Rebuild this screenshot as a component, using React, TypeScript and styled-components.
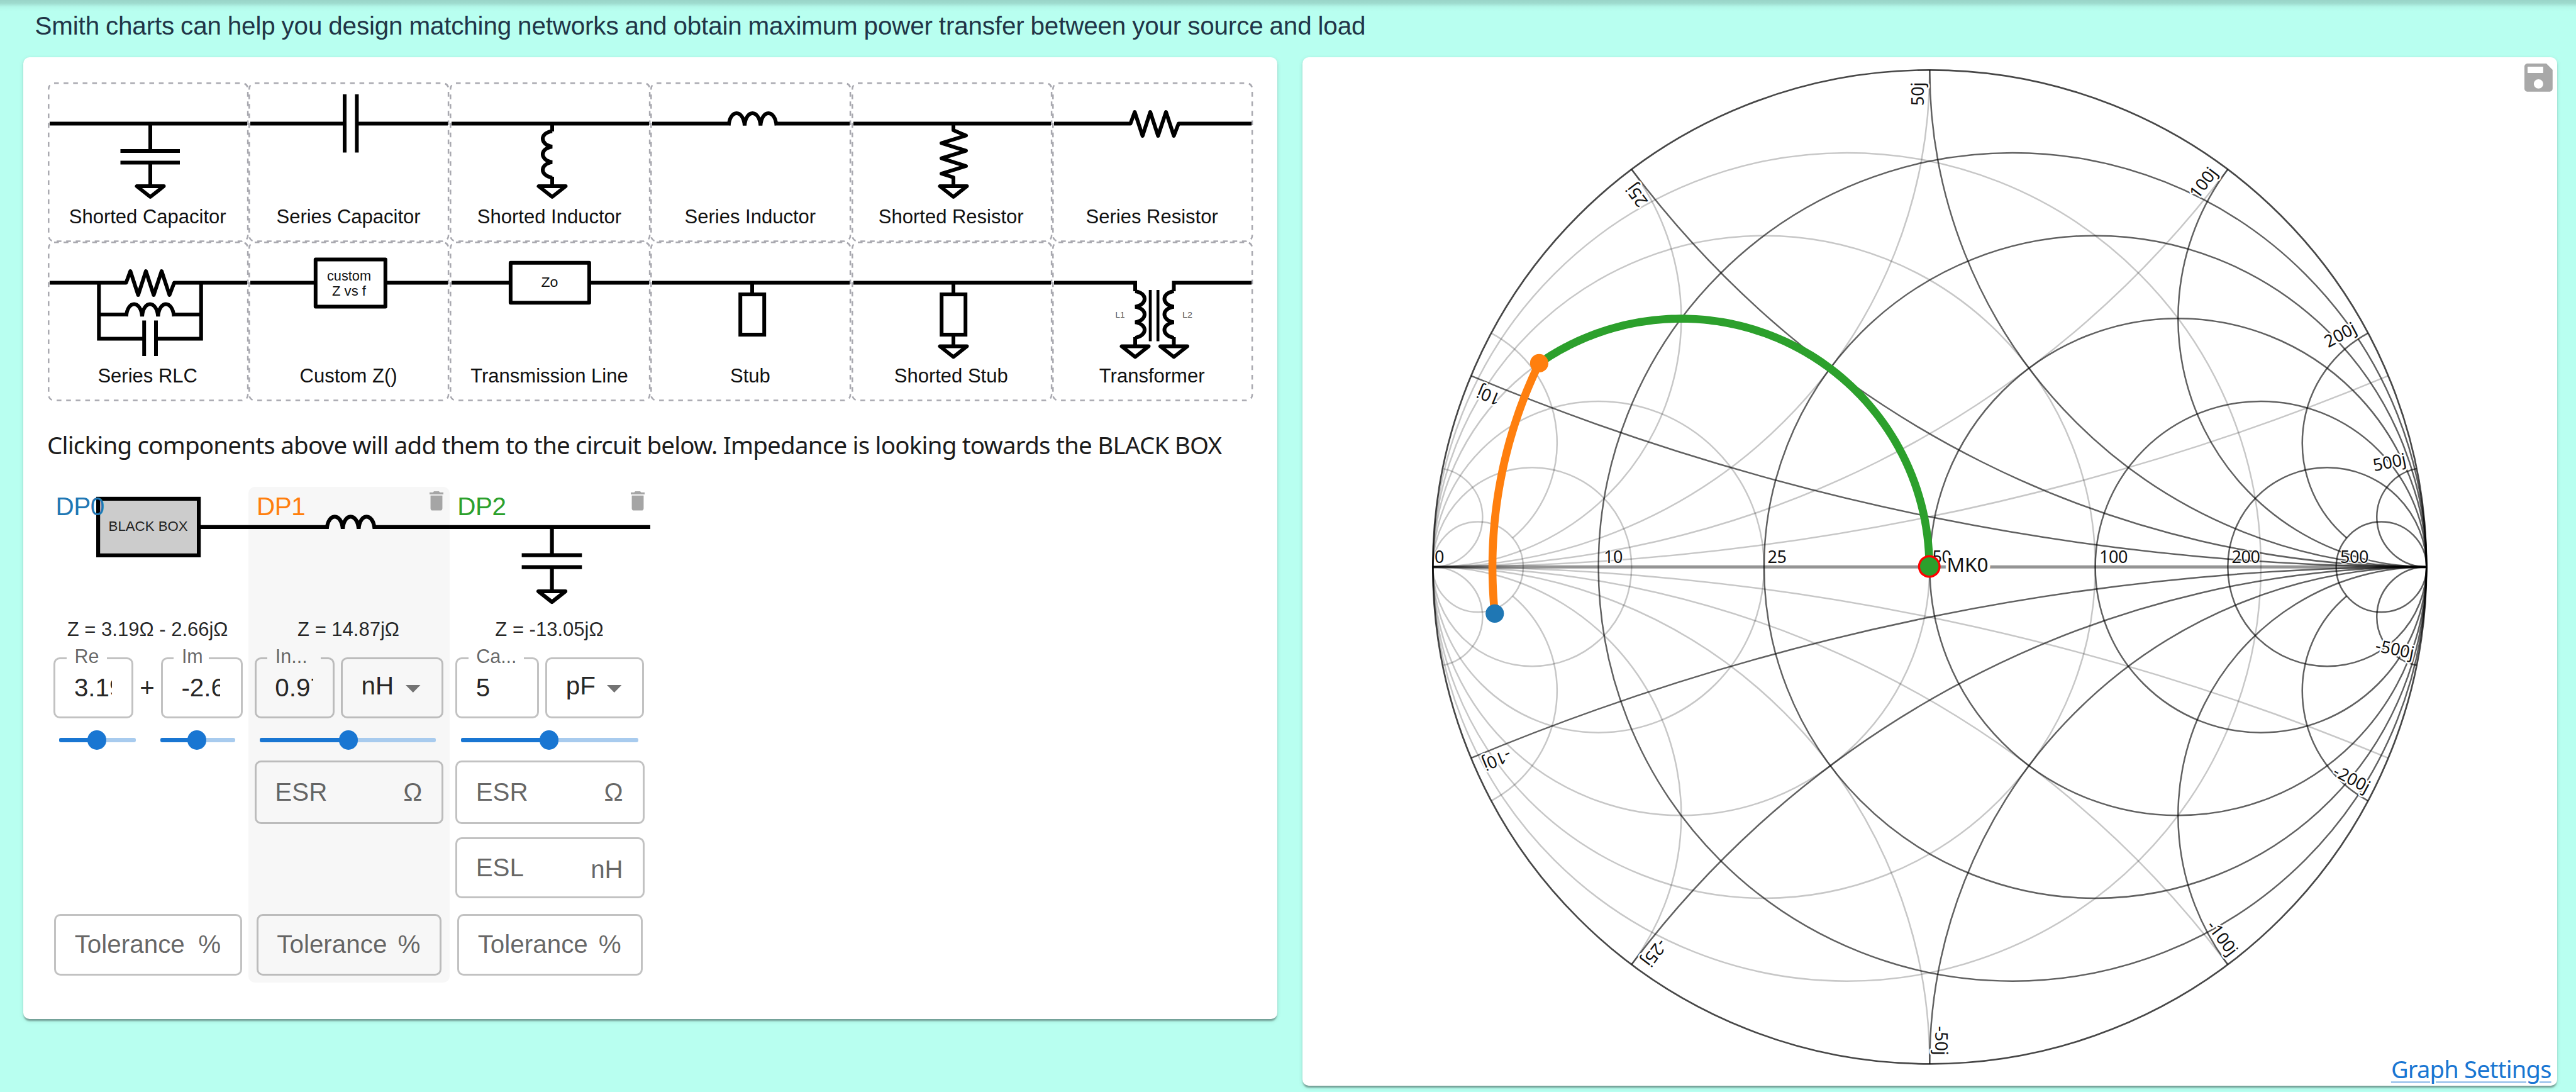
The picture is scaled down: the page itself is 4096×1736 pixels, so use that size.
import React from "react";
import styled, { createGlobalStyle } from "styled-components";

const GlobalStyle = createGlobalStyle`
  *, *::before, *::after { box-sizing: border-box; }
  html, body { margin: 0; padding: 0; }
  body { background: #b8fff0; overflow: hidden; }
`;

const grotesque = `"Liberation Sans", Arial, sans-serif`;
const humanist = `"Noto Sans", "Open Sans", sans-serif`;

/* ---------- page ---------- */

const Page = styled.div`
  width: 4096px;
  height: 1736px;
  display: flex;
  flex-direction: column;
  background: #b8fff0;
  color: rgba(0, 0, 0, 0.87);
  font-family: ${grotesque};
`;

const Intro = styled.header`
  height: 91.2px;
  flex: none;
  padding: 17.5px 0 0 55.5px;
  font-size: 40.4px;
  line-height: 47.3px;
  letter-spacing: -0.16px;
  word-spacing: -1px;
  white-space: nowrap;
  color: #213547;
  background: linear-gradient(
    to bottom,
    rgba(0, 0, 0, 0.17) 0,
    rgba(0, 0, 0, 0.14) 5px,
    rgba(0, 0, 0, 0.03) 11px,
    transparent 18px
  );
`;

const Cards = styled.main`
  display: flex;
  align-items: flex-start;
  gap: 39.4px;
  padding: 0 36.7px;
`;

const Card = styled.section<{ $height: number }>`
  width: 1994.8px;
  height: ${(p) => p.$height}px;
  flex: none;
  background: #fff;
  border-radius: 10px;
  box-shadow:
    0 5px 2.5px -2.5px rgba(0, 0, 0, 0.2),
    0 2.5px 2.5px rgba(0, 0, 0, 0.14),
    0 2.5px 7.5px rgba(0, 0, 0, 0.12);
`;

const CircuitCard = styled(Card)`
  padding: 39.4px 39.3px;
`;

const ChartCard = styled(Card)`
  position: relative;
`;

/* ---------- component palette ---------- */

const Palette = styled.div`
  display: grid;
  grid-template-columns: repeat(6, 319.4px);
  grid-auto-rows: 253.8px;
`;

const PaletteCell = styled.button`
  position: relative;
  display: flex;
  align-items: flex-end;
  justify-content: center;
  padding: 0 2px 22.2px 0;
  border: 0;
  background: none;
  color: #111;
  font-family: ${grotesque};
  font-size: 31px;
  line-height: 35.5px;
  white-space: nowrap;
`;

const CellDrawing = styled.svg`
  position: absolute;
  inset: 0;
  width: 319.4px;
  height: 253.8px;
  overflow: visible;
`;

const Hint = styled.p`
  margin: 42.9px 0 0 -1px;
  font-family: ${humanist};
  font-size: 38.5px;
  line-height: 52.4px;
  letter-spacing: -0.79px;
  white-space: nowrap;
  color: #1c1c1c;
`;

const OUTLINE =
  "M10,1.3H309.4A8.7,8.7 0 0 1 318.1,10V243.8A8.7,8.7 0 0 1 309.4,252.5H10A8.7,8.7 0 0 1 1.3,243.8V10A8.7,8.7 0 0 1 10,1.3Z";

const Ground = ({ x = 163, y = 165 }: { x?: number; y?: number }) => (
  <path d={`M${x - 21.5},${y}H${x + 21.5}L${x},${y + 17}Z`} strokeLinejoin="round" />
);

const coilAcross = (x: number, y: number) =>
  `M${x},${y + 3}c2,-26 23,-26 25.3,0c2,-26 23,-26 25.3,0c2,-26 23,-26 25.3,0`;

const coilDown = (x: number, y: number, bulge: number) =>
  `M${x},${y}c${bulge},3 ${bulge},21 0,24.7c${bulge},3 ${bulge},21 0,24.7c${bulge},3 ${bulge},21 0,24.7`;

const ZIGZAG = "M3,65.5H124.5L131.3,47L143.7,85L156,47L168.4,85L181,47L193.5,85L201,65.5H317";

const Symbol = {
  shortedCapacitor: (
    <>
      <path d="M3,65.5H317M163,65V109M115.5,109H210M115.5,127.5H210M163,127.5V164" />
      <Ground />
    </>
  ),
  seriesCapacitor: <path d="M3,65.5H153M172.4,65.5H317M153,19V111.6M172.4,19V111.6" />,
  shortedInductor: (
    <>
      <path d={`M3,65.5H317M163,65V78${coilDown(163, 77.5, -20)}M163,150V164`} />
      <Ground />
    </>
  ),
  seriesInductor: <path d={`M3,65.5H126M199.5,65.5H317${coilAcross(124.7, 65.5)}`} />,
  shortedResistor: (
    <>
      <path
        d="M3,65.5H317M162,65V76L182,84.5L143,96.5L182,108.7L143,120.7L182,133L143,145L162,151V164"
        strokeLinejoin="round"
      />
      <Ground x={162} />
    </>
  ),
  seriesResistor: <path d={ZIGZAG} strokeLinejoin="round" />,
  seriesRlc: (
    <>
      <path d={ZIGZAG} strokeLinejoin="round" />
      <path d={`M81.3,65V154.5H153.2M243.8,65V154.5H172M81.3,116H126M199.5,116H243.8${coilAcross(124.7, 116)}`} />
      <path d="M153.2,125.5V182M172,125.5V182" />
    </>
  ),
  customZ: (
    <>
      <path d="M3,65.5H105M220,65.5H317" />
      <rect x="106.8" y="28.4" width="111" height="75" strokeLinejoin="round" />
      <Caption x={160} y={61.6} size={22} width={70}>custom</Caption>
      <Caption x={160} y={85.6} size={22} width={54}>Z vs f</Caption>
    </>
  ),
  transmissionLine: (
    <>
      <path d="M3,65.5H95M224,65.5H317" />
      <rect x="96.9" y="33.8" width="125" height="63.4" strokeLinejoin="round" />
      <Caption x={159} y={72.4} size={22} width={27}>Zo</Caption>
    </>
  ),
  stub: (
    <>
      <path d="M3,65.5H317M162,65V84" />
      <rect x="143.2" y="84" width="38" height="64" />
    </>
  ),
  shortedStub: (
    <>
      <path d="M3,65.5H317M162,65V84M162,148V165" />
      <rect x="143.2" y="84" width="38" height="64" />
      <Ground x={162} y={166.5} />
    </>
  ),
  transformer: (
    <>
      <path d={`M3,65.5H132V79${coilDown(132, 79, 20)}M132,152V166`} />
      <path d={`M317,65.5H193.5V79${coilDown(193.5, 79, -20)}M193.5,152V166`} />
      <path d="M156,77V158.5M168.2,77V158.5" strokeWidth={4.6} />
      <Ground x={132} y={166.5} />
      <Ground x={193.5} y={166.5} />
      <Caption x={108} y={121} size={13.5} width={15} tone="#555">L1</Caption>
      <Caption x={215} y={121} size={13.5} width={16} tone="#555">L2</Caption>
    </>
  ),
};

function Caption(props: {
  x: number;
  y: number;
  size: number;
  width: number;
  tone?: string;
  children: React.ReactNode;
}) {
  return (
    <text
      x={props.x}
      y={props.y}
      fontSize={props.size}
      textLength={props.width}
      lengthAdjust="spacingAndGlyphs"
      textAnchor="middle"
      fill={props.tone ?? "#111"}
      stroke="none"
      fontFamily='"Liberation Sans", Arial, sans-serif'
    >
      {props.children}
    </text>
  );
}

const PALETTE: { name: string; art: React.ReactNode }[] = [
  { name: "Shorted Capacitor", art: Symbol.shortedCapacitor },
  { name: "Series Capacitor", art: Symbol.seriesCapacitor },
  { name: "Shorted Inductor", art: Symbol.shortedInductor },
  { name: "Series Inductor", art: Symbol.seriesInductor },
  { name: "Shorted Resistor", art: Symbol.shortedResistor },
  { name: "Series Resistor", art: Symbol.seriesResistor },
  { name: "Series RLC", art: Symbol.seriesRlc },
  { name: "Custom Z()", art: Symbol.customZ },
  { name: "Transmission Line", art: Symbol.transmissionLine },
  { name: "Stub", art: Symbol.stub },
  { name: "Shorted Stub", art: Symbol.shortedStub },
  { name: "Transformer", art: Symbol.transformer },
];

function PaletteItem({ name, art }: { name: string; art: React.ReactNode }) {
  return (
    <PaletteCell>
      <CellDrawing viewBox="0 0 319.4 253.8" fill="none" stroke="#000" strokeWidth={6}>
        <path d={OUTLINE} stroke="#a9a9b0" strokeWidth={2.5} pathLength={74} strokeDasharray="0.5 0.5" />
        {art}
      </CellDrawing>
      {name}
    </PaletteCell>
  );
}

/* ---------- circuit ---------- */

const Circuit = styled.div`
  display: flex;
  margin-top: 40.7px;
  height: 788px;
`;

const Stage = styled.div<{ $shade: string }>`
  position: relative;
  width: 319.4px;
  height: 788px;
  display: flex;
  flex-direction: column;
  padding: 0 9.4px 11.6px;
  border-radius: 10px;
  background: ${(p) => p.$shade};
`;

const StageDrawing = styled.svg`
  width: 319.4px;
  height: 209px;
  flex: none;
  margin-left: -9.4px;
  overflow: visible;
`;

const StageTitle = styled.div<{ $color: string }>`
  position: absolute;
  left: 12.5px;
  top: 8px;
  font-size: 40.4px;
  line-height: 47.3px;
  letter-spacing: -0.4px;
  color: ${(p) => p.$color};
`;

const TrashIcon = styled.svg`
  position: absolute;
  left: 288px;
  top: 7px;
  width: 22px;
  height: 30.6px;
  fill: #a5a5a5;
`;

const Impedance = styled.div`
  height: 35.5px;
  margin: 0 2px 26.4px 0;
  font-size: 31px;
  line-height: 35.5px;
  text-align: center;
  white-space: nowrap;
`;

const InputRow = styled.div<{ $gap: number }>`
  display: flex;
  align-items: center;
  gap: ${(p) => p.$gap}px;
  height: 96.7px;
  flex: none;
`;

const Plus = styled.span`
  width: 43.5px;
  margin-top: 1px;
  text-align: center;
  font-size: 40.4px;
`;

const Outlined = styled.div<{ $width?: number; $height: number }>`
  position: relative;
  display: flex;
  align-items: center;
  width: ${(p) => (p.$width ? `${p.$width}px` : "auto")};
  height: ${(p) => p.$height}px;
  flex: none;
  padding: 0 31px 0 29.5px;
  border: 3px solid rgba(0, 0, 0, 0.24);
  border-radius: 10px;
  font-size: 40.4px;
  line-height: 47.3px;
  white-space: nowrap;
`;

const FieldLabel = styled.span<{ $width: number; $shade: string }>`
  position: absolute;
  left: 17.5px;
  top: -22.4px;
  width: ${(p) => p.$width}px;
  padding-left: 12.5px;
  background: ${(p) => p.$shade};
  color: rgba(0, 0, 0, 0.6);
  font-size: 30.5px;
  line-height: 35.5px;
`;

const FieldValue = styled.span`
  width: 62px;
  margin-top: 1px;
  overflow: hidden;
`;

const UnitSelect = styled(Outlined)`
  padding-bottom: 4.5px;
  padding-right: 33px;
  justify-content: space-between;
`;

const Caret = styled.svg`
  width: 23.5px;
  height: 12px;
  margin-top: 8.5px;
  fill: #737373;
`;

const Optional = styled(Outlined)<{ $top?: string; $inset?: number }>`
  justify-content: space-between;
  margin: ${(p) => p.$top ?? "0"} ${(p) => p.$inset ?? 0}px 0;
  color: rgba(0, 0, 0, 0.6);
`;

const Suffix = styled.span<{ $drop?: number }>`
  position: relative;
  top: ${(p) => p.$drop ?? 0}px;
`;

const SliderRow = styled.div`
  display: flex;
  align-items: center;
  height: 67.6px;
  flex: none;
  padding-left: 8.4px;
  gap: 39px;
`;

const Rail = styled.div<{ $width: number }>`
  position: relative;
  width: ${(p) => p.$width}px;
  height: 6.4px;
  margin-top: 1.6px;
  border-radius: 3px;
  background: #a8cbee;
`;

const Track = styled.div<{ $at: number }>`
  width: ${(p) => p.$at}px;
  height: 6.4px;
  border-radius: 3px;
  background: #1976d2;
`;

const Thumb = styled.div<{ $at: number }>`
  position: absolute;
  top: -12px;
  left: ${(p) => p.$at - 15.2}px;
  width: 30.4px;
  height: 30.4px;
  border-radius: 50%;
  background: #1976d2;
`;

const Slider = ({ width, at }: { width: number; at: number }) => (
  <Rail $width={width}>
    <Track $at={at} />
    <Thumb $at={at} />
  </Rail>
);

interface FieldProps {
  label: string;
  value: string;
  width: number;
  notch: number;
  shade?: string;
}

const Field = ({ label, value, width, notch, shade = "#fff" }: FieldProps) => (
  <Outlined $width={width} $height={96.7}>
    <FieldLabel $width={notch} $shade={shade}>{label}</FieldLabel>
    <FieldValue>{value}</FieldValue>
  </Outlined>
);

const Unit = ({ name, width }: { name: string; width: number }) => (
  <UnitSelect $width={width} $height={96.7}>
    {name}
    <Caret viewBox="0 0 10 5" preserveAspectRatio="none">
      <path d="M0,0L5,5L10,0Z" />
    </Caret>
  </UnitSelect>
);

const Trash = () => (
  <TrashIcon viewBox="5 3 14 18" preserveAspectRatio="none">
    <path d="M6 19c0 1.1.9 2 2 2h8c1.1 0 2-.9 2-2V7H6v12zM19 4h-3.5l-1-1h-5l-1 1H5v2h14V4z" />
  </TrashIcon>
);

const Tolerance = ({ inset }: { inset: number }) => (
  <Optional $height={97.8} $top="auto" $inset={inset}>
    <span>Tolerance</span>
    <Suffix>%</Suffix>
  </Optional>
);

/* ---------- Smith chart ---------- */

const ChartSvg = styled.svg`
  display: block;
  width: 1994.8px;
  height: 1634.8px;
`;

const SaveIcon = styled.svg`
  position: absolute;
  left: 1943.6px;
  top: 9.8px;
  width: 44.8px;
  height: 44.8px;
  fill: #a8a8a8;
`;

const SettingsLink = styled.a`
  position: absolute;
  right: 9px;
  bottom: 0.5px;
  font-family: ${humanist};
  font-size: 38px;
  line-height: 52px;
  letter-spacing: -0.75px;
  white-space: nowrap;
  color: #1976d2;
  text-decoration: underline;
  text-decoration-color: rgba(25, 118, 210, 0.4);
  text-decoration-thickness: 2.6px;
  text-underline-offset: 4.5px;
`;

const CX = 997.3;
const CY = 810.3;
const R = 790;

type Complex = [number, number];

const div = (a: Complex, b: Complex): Complex => {
  const m = b[0] * b[0] + b[1] * b[1];
  return [(a[0] * b[0] + a[1] * b[1]) / m, (a[1] * b[0] - a[0] * b[1]) / m];
};

const reflection = ([re, im]: Complex): Complex => div([re - 1, im], [re + 1, im]);

const toScreen = ([u, v]: Complex, mirror = 1): Complex => [CX + mirror * u * R, CY - v * R];

const polyline = (points: Complex[]) =>
  points.map(([x, y], i) => `${i ? "L" : "M"}${x.toFixed(2)},${y.toFixed(2)}`).join("");

const LEVELS = [0.2, 0.5, 1, 2, 4, 10];

function reactanceArc(x: number, mirror: number) {
  const [sx, sy] = toScreen(reflection([0, x]), mirror);
  const end: Complex = Math.abs(x) === 4 ? reflection([10, x]) : [1, 0];
  const [ex, ey] = toScreen(end, mirror);
  const r = R / Math.abs(x);
  const sweep = x > 0 === mirror > 0 ? 0 : 1;
  return `M${sx},${sy}A${r},${r} 0 0 ${sweep} ${ex},${ey}`;
}

const Grid = ({ mirror, opacity }: { mirror: number; opacity: number }) => (
  <g fill="none" stroke="#000" strokeWidth={2.5} strokeOpacity={opacity}>
    {LEVELS.map((r) => (
      <circle key={r} cx={CX + (mirror * R * r) / (1 + r)} cy={CY} r={R / (1 + r)} />
    ))}
    {LEVELS.flatMap((x) => [x, -x]).map((x) => (
      <path key={x} d={reactanceArc(x, mirror)} />
    ))}
  </g>
);

const AXIS_LABELS: [string, number][] = [
  ["0", 210],
  ["10", 479],
  ["25", 739.5],
  ["50", 1001.5],
  ["100", 1267],
  ["200", 1477.5],
  ["500", 1650],
];

const RIM_LABELS: [number, string][] = LEVELS.flatMap((x) => [
  [x, `${x * 50}j`] as [number, string],
  [-x, `-${x * 50}j`] as [number, string],
]);

function RimLabel({ x, text }: { x: number; text: string }) {
  const g = reflection([0, x]);
  const [px, py] = toScreen(g);
  const angle = Math.atan2(g[1], g[0]);
  const start = (Math.abs(x) < 2 ? 57 : 67) + (x < 0 ? 3 : 0);
  return (
    <text transform={`translate(${px},${py}) rotate(${(-angle * 180) / Math.PI})`} x={-start} y={-9}>
      {text}
    </text>
  );
}

const Z0 = 50;
const load: Complex = [3.19 / Z0, -2.66 / Z0];
const inductorArc: Complex[] = Array.from({ length: 61 }, (_, i) =>
  toScreen(reflection([load[0], load[1] + ((14.87 / Z0) * i) / 60])),
);
const afterInductor: Complex = [load[0], load[1] + 14.87 / Z0];
const capacitorArc: Complex[] = Array.from({ length: 121 }, (_, i) => {
  const y = div([1, 0], afterInductor);
  return toScreen(reflection(div([1, 0], [y[0], y[1] + ((Z0 / 13.05) * i) / 120])));
});

const Dot = ({ at, color }: { at: Complex; color: string }) => (
  <circle cx={at[0]} cy={at[1]} r={14.6} fill={color} />
);

function SmithChart() {
  const endPoint = capacitorArc[capacitorArc.length - 1];
  return (
    <ChartSvg viewBox="0 0 1994.8 1634.8">
      <Grid mirror={-1} opacity={0.22} />
      <Grid mirror={1} opacity={0.62} />
      <path d={`M${CX - R},${CY}H${CX + R}`} stroke="#000" strokeOpacity={0.42} strokeWidth={5} />
      <circle cx={CX} cy={CY} r={R} fill="none" stroke="#000" strokeOpacity={0.72} strokeWidth={2.7} />
      <g
        fontFamily='"Noto Sans", "Open Sans", sans-serif'
        fontSize={27}
        fill="#111"
        stroke="#fff"
        strokeLinejoin="round"
        paintOrder="stroke"
      >
        <g strokeWidth={2.5} letterSpacing={-0.4}>
          {AXIS_LABELS.map(([text, x]) => (
            <text key={text} x={x} y={804}>{text}</text>
          ))}
        </g>
        <g strokeWidth={5}>
          {RIM_LABELS.map(([x, text]) => (
            <RimLabel key={x} x={x} text={text} />
          ))}
        </g>
      </g>
      <g fill="none" strokeWidth={12.6}>
        <path d={polyline(inductorArc)} stroke="#ff7f0e" />
        <path d={polyline(capacitorArc)} stroke="#2ca02c" />
      </g>
      <text
        x={1024.5}
        y={818.5}
        fontFamily='"Noto Sans", "Open Sans", sans-serif'
        fontSize={31.5}
        fill="#111"
        stroke="#fff"
        strokeWidth={9}
        strokeLinejoin="round"
        paintOrder="stroke"
      >
        MK0
      </text>
      <circle cx={endPoint[0]} cy={endPoint[1]} r={18} fill="#ff0000" />
      <Dot at={inductorArc[0]} color="#1f77b4" />
      <Dot at={capacitorArc[0]} color="#ff7f0e" />
      <Dot at={endPoint} color="#2ca02c" />
    </ChartSvg>
  );
}

/* ---------- app ---------- */

const SHADE = "#f7f7f7";

export default function App() {
  return (
    <Page>
      <GlobalStyle />
      <Intro>
        Smith charts can help you design matching networks and obtain maximum power transfer between your source and
        load
      </Intro>
      <Cards>
        <CircuitCard $height={1529}>
          <Palette>
            {PALETTE.map((item) => (
              <PaletteItem key={item.name} {...item} />
            ))}
          </Palette>
          <Hint>
            Clicking components above will add them to the circuit below. Impedance is looking towards the BLACK BOX
          </Hint>
          <Circuit>
            <Stage $shade="#fff">
              <StageDrawing viewBox="0 0 319.4 209" fill="none" stroke="#000" strokeWidth={6.2}>
                <rect x="80.1" y="18.9" width="160" height="90" fill="#ccc" />
                <path d="M240,63.8H320" />
                <Caption x={159.6} y={69.6} size={22} width={126} tone="#222">BLACK BOX</Caption>
              </StageDrawing>
              <StageTitle $color="#1f77b4">DP0</StageTitle>
              <Impedance>Z = 3.19Ω - 2.66jΩ</Impedance>
              <InputRow $gap={0}>
                <Field label="Re" value="3.19" width={127} notch={64.5} />
                <Plus>+</Plus>
                <Field label="Im" value="-2.66" width={130} notch={55.5} />
              </InputRow>
              <SliderRow>
                <Slider width={121.8} at={60} />
                <Slider width={119.2} at={58.6} />
              </SliderRow>
              <Tolerance inset={0.8} />
            </Stage>
            <Stage $shade={SHADE}>
              <StageDrawing viewBox="0 0 319.4 209" fill="none" stroke="#000" strokeWidth={6.2}>
                <path d={`M0,63.8H126M199.5,63.8H320${coilAcross(124.7, 63.8)}`} />
              </StageDrawing>
              <StageTitle $color="#ff7f0e">DP1</StageTitle>
              <Trash />
              <Impedance>Z = 14.87jΩ</Impedance>
              <InputRow $gap={10}>
                <Field label="In..." value="0.97" width={127.3} notch={85} shade={SHADE} />
                <Unit name="nH" width={162.7} />
              </InputRow>
              <SliderRow>
                <Slider width={280.3} at={141} />
              </SliderRow>
              <Optional $height={100.3}>
                <span>ESR</span>
                <Suffix>Ω</Suffix>
              </Optional>
              <Tolerance inset={3} />
            </Stage>
            <Stage $shade="transparent">
              <StageDrawing viewBox="0 0 319.4 209" fill="none" stroke="#000" strokeWidth={6.2}>
                <path d="M0,63.8H319M162.6,63V108.6M114.6,108.6H210.3M114.6,127.7H210.3M162.6,127.7V165" />
                <Ground x={162.6} y={166} />
              </StageDrawing>
              <StageTitle $color="#2ca02c">DP2</StageTitle>
              <Trash />
              <Impedance>Z = -13.05jΩ</Impedance>
              <InputRow $gap={9.8}>
                <Field label="Ca..." value="5" width={133.3} notch={88} />
                <Unit name="pF" width={157} />
              </InputRow>
              <SliderRow>
                <Slider width={282.9} at={140.5} />
              </SliderRow>
              <Optional $height={100.3}>
                <span>ESR</span>
                <Suffix>Ω</Suffix>
              </Optional>
              <Optional $height={97.4} $top="21.4px">
                <span>ESL</span>
                <Suffix $drop={3}>nH</Suffix>
              </Optional>
              <Tolerance inset={3} />
            </Stage>
          </Circuit>
        </CircuitCard>
        <ChartCard $height={1634.8}>
          <SmithChart />
          <SaveIcon viewBox="3 3 18 18">
            <path d="M17 3H5c-1.11 0-2 .9-2 2v14c0 1.1.89 2 2 2h14c1.1 0 2-.9 2-2V7l-4-4zm-5 16c-1.66 0-3-1.34-3-3s1.34-3 3-3 3 1.34 3 3-1.34 3-3 3zm3-10H5V5h10v4z" />
          </SaveIcon>
          <SettingsLink>Graph Settings</SettingsLink>
        </ChartCard>
      </Cards>
    </Page>
  );
}
